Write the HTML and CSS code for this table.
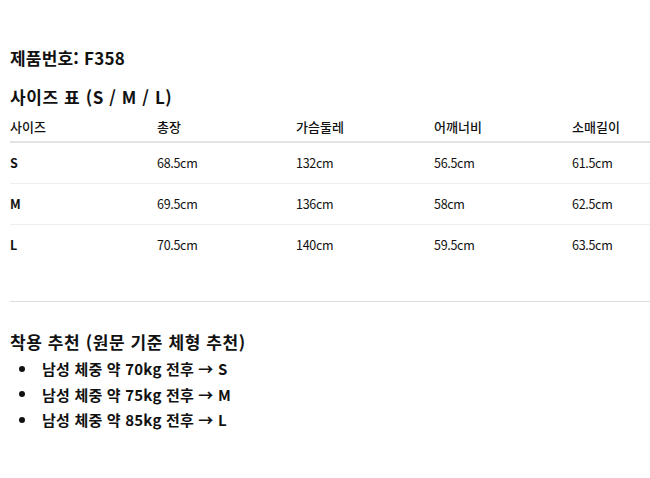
FILE: index.html
```html
<!DOCTYPE html>
<html lang="ko">
<head>
<meta charset="utf-8">
<link rel="stylesheet" href="styles.css">
</head>
<body>
<div class="page">
  <h2 class="product">제품번호: F358</h2>
  <h3 class="title">사이즈 표 (S / M / L)</h3>
  <table class="size-table">
    <colgroup>
      <col class="c1"><col class="c2"><col class="c3"><col class="c4"><col class="c5">
    </colgroup>
    <thead>
      <tr><th>사이즈</th><th>총장</th><th>가슴둘레</th><th>어깨너비</th><th>소매길이</th></tr>
    </thead>
    <tbody>
      <tr><td class="sz">S</td><td>68.5cm</td><td>132cm</td><td>56.5cm</td><td>61.5cm</td></tr>
      <tr><td class="sz">M</td><td>69.5cm</td><td>136cm</td><td>58cm</td><td>62.5cm</td></tr>
      <tr class="last"><td class="sz">L</td><td>70.5cm</td><td>140cm</td><td>59.5cm</td><td>63.5cm</td></tr>
    </tbody>
  </table>
  <hr class="divider">
  <h3 class="title rec">착용 추천 (원문 기준 체형 추천)</h3>
  <ul class="recs">
    <li>남성 체중 약 70kg 전후 → S</li>
    <li>남성 체중 약 75kg 전후 → M</li>
    <li>남성 체중 약 85kg 전후 → L</li>
  </ul>
</div>
</body>
</html>
```
FILE: styles.css
```css
html, body {
  margin: 0;
  padding: 0;
  background: #fff;
}
body {
  font-family: "Noto Sans CJK KR", "Noto Sans", sans-serif;
  color: #111;
}
.page {
  padding: 46px 0 0 10px;
  width: 640px;
}
.product {
  margin: 0;
  font-size: 17px;
  line-height: 24px;
  font-weight: 700;
  letter-spacing: 0.2px;
}
.title {
  margin: 15px 0 0;
  font-size: 17px;
  line-height: 24px;
  font-weight: 700;
  letter-spacing: 0.6px;
}
.size-table {
  width: 640px;
  border-collapse: collapse;
  margin-top: 9px;
  table-layout: fixed;
}
.c1 { width: 147px; }
.c2 { width: 139px; }
.c3 { width: 138px; }
.c4 { width: 138px; }
.c5 { width: 78px; }
.size-table th {
  text-align: left;
  font-size: 13px;
  font-weight: 500;
  padding: 0;
  height: 23px;
  line-height: 18px;
  vertical-align: top;
  border-bottom: 2px solid #e4e4e4;
}
.size-table td {
  font-size: 12.5px;
  padding: 0;
  height: 40px;
  line-height: 18px;
  border-bottom: 1px solid #eeeeee;
  letter-spacing: -0.3px;
}
.size-table tr.last td {
  border-bottom: none;
}
.size-table td.sz {
  font-weight: 700;
}
.divider {
  border: 0;
  border-top: 1px solid #dddddd;
  margin: 36px 0 0;
}
.title.rec {
  margin-top: 28px;
}
.recs {
  list-style: none;
  margin: 2px 0 0;
  padding: 0;
  font-size: 15px;
  font-weight: 700;
  line-height: 25.5px;
  letter-spacing: 0.2px;
}
.recs li {
  display: flex;
  align-items: center;
}
.recs li::before {
  content: "";
  width: 6px;
  height: 6px;
  border-radius: 50%;
  background: #111;
  margin: 0 17px 0 9px;
  flex: none;
}
```
